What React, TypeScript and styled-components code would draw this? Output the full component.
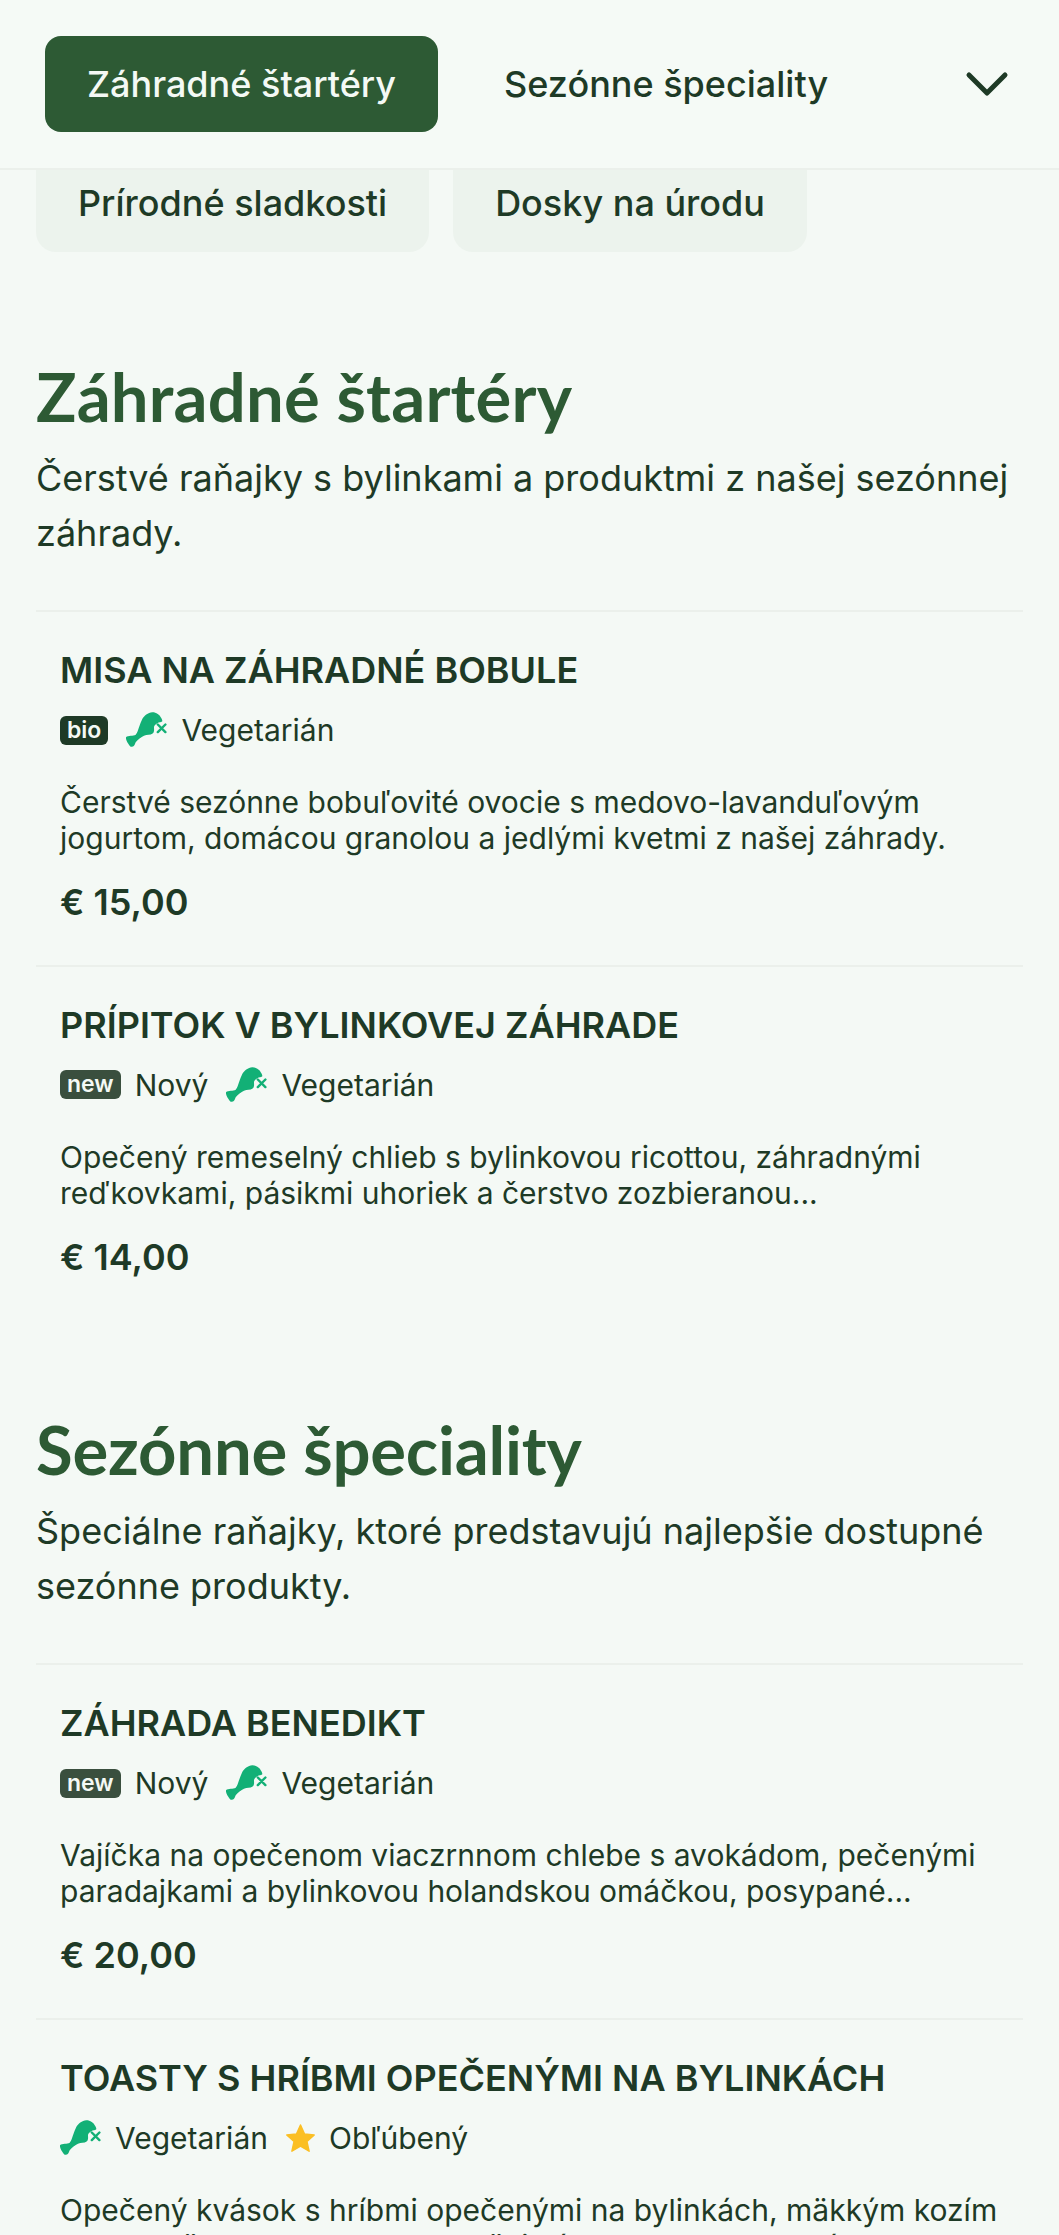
import React from "react";
import styled, { createGlobalStyle } from "styled-components";

const Global = createGlobalStyle`
  html, body { margin: 0; padding: 0; background: #f4f9f5; }
  body { font-family: Inter, "Liberation Sans", sans-serif; color: #1e3a26; }
`;

const Page = styled.div`
  width: 1059px;
  height: 2235px;
  overflow: hidden;
  background: #f4f9f5;
  position: relative;
`;

const Header = styled.header`
  position: absolute;
  top: 0;
  left: 0;
  right: 0;
  height: 170px;
  box-sizing: border-box;
  padding: 36px 50px 0 45px;
  display: flex;
  align-items: flex-start;
  background: #f5faf6;
  border-bottom: 2px solid #ebf0eb;
  z-index: 2;
`;

const Tab = styled.div<{ $active?: boolean }>`
  height: 96px;
  box-sizing: border-box;
  padding: 0 42px;
  display: flex;
  align-items: center;
  border-radius: 16px;
  font-size: 36px;
  font-weight: 500;
  white-space: nowrap;
  background: ${(p) => (p.$active ? "#2d5a34" : "transparent")};
  color: ${(p) => (p.$active ? "#f4f9f5" : "#1e3a26")};
  margin-right: ${(p) => (p.$active ? "24px" : "0")};
`;

const Chevron = styled.div`
  margin-left: auto;
  height: 96px;
  display: flex;
  align-items: center;
`;

const ChipRow = styled.div`
  display: flex;
  gap: 24px;
  padding: 108px 36px 0;
`;

const Chip = styled.div`
  height: 144px;
  box-sizing: border-box;
  padding: 59px 42px 0;
  border-radius: 20px;
  background: #ecf3ed;
  font-size: 36px;
  line-height: 72px;
  font-weight: 500;
  white-space: nowrap;
`;

const Section = styled.section`
  padding: 0 36px;
`;

const Head = styled.div<{ $top: number }>`
  padding-top: ${(p) => p.$top}px;
  padding-bottom: 50px;
`;

const Title = styled.h2<{ $tracking: number }>`
  margin: 0;
  font-family: Lato, sans-serif;
  font-weight: 700;
  font-size: 67px;
  line-height: 80px;
  letter-spacing: ${(p) => p.$tracking}px;
  color: #2d5a34;
`;

const Subtitle = styled.p`
  margin: 15px 0 0;
  font-size: 36px;
  line-height: 54.500px;
`;

const Item = styled.article`
  border-top: 2px solid #ebf0eb;
  padding: 36px 24px 0;
  box-sizing: border-box;
  height: 354.500px;
`;

const ItemName = styled.h3`
  margin: 0;
  font-size: 36px;
  line-height: 44px;
  font-weight: 600;
  text-transform: uppercase;
`;

const Tags = styled.div`
  display: flex;
  align-items: center;
  margin-top: 18px;
  height: 40px;
  font-size: 30px;
`;

const Tag = styled.span`
  display: flex;
  align-items: center;
  gap: 14px;
  margin-right: 18px;
`;

const Badge = styled.span<{ $bg: string }>`
  background: ${(p) => p.$bg};
  color: #f4f9f5;
  font-size: 23px;
  font-weight: 600;
  line-height: 29px;
  padding: 0 7px;
  border-radius: 6px;
`;

const Desc = styled.p`
  margin: 34px 0 0;
  font-size: 30px;
  line-height: 36px;
`;

const Price = styled.div`
  margin-top: 24px;
  font-size: 36px;
  line-height: 44px;
  font-weight: 600;
`;

const Leg = () => (
  <svg width="41" height="36" viewBox="0 0 41 36">
    <path
      fill="#12b076"
      d="M16.300 7C18 4 22 .5 26.300 .3C30 .2 34 3 34.700 5.300C35.500 6.500 36.500 8 36.300 9.300C35 10.500 33 10 31.300 11.300C29 12.800 28 14 28 15.300C28 17.500 28.500 19.500 27 21.300C24 23.500 21 22.500 18 23.700C15 25 12 27.500 9.700 30.300C9 31.500 8.800 33 8 33.700C7 34.800 5.500 35 4.700 34.700C3.500 34.200 2.800 32.500 1.300 30.300C.5 28.500 -.3 27 0 25.300C1 24 3 24.200 4.700 23.700C6.500 23.500 8.500 23.800 9.700 22.700C11.500 20.500 12 18 13 15.300C14 12.500 15 9.500 16.300 7Z"
    />
    <path stroke="#12b076" strokeWidth="2.400" strokeLinecap="round" d="M31.800 12.500l7.600 7.600M39.400 12.500l-7.600 7.600" />
  </svg>
);

const Star = () => (
  <svg width="29" height="30" viewBox="0 0 30 30">
    <path
      fill="#fbbf24"
      stroke="#fbbf24"
      strokeWidth="1.500"
      strokeLinejoin="round"
      d="M15 1.500l4.200 9.400 10 1-7.500 6.800 2.200 10L15 23.500l-8.900 5.200 2.200-10L.8 11.900l10-1z"
    />
  </svg>
);

type TagKind = "bio" | "new" | "veg" | "fav";

const TagView = ({ kind }: { kind: TagKind }) => {
  if (kind === "bio") return <Tag><Badge $bg="#1e3a26">bio</Badge></Tag>;
  if (kind === "new") return <Tag><Badge $bg="#3a4f3e">new</Badge>Nový</Tag>;
  if (kind === "veg") return <Tag><Leg />Vegetarián</Tag>;
  return <Tag><Star />Obľúbený</Tag>;
};

const sections = [
  {
    title: "Záhradné štartéry",
    tracking: 0.2,
    sub: "Čerstvé raňajky s bylinkami a produktmi z našej sezónnej záhrady.",
    items: [
      { name: "Misa na záhradné bobule", tags: ["bio", "veg"] as TagKind[], desc: ["Čerstvé sezónne bobuľovité ovocie s medovo-lavanduľovým", "jogurtom, domácou granolou a jedlými kvetmi z našej záhrady."], price: "€ 15,00" },
      { name: "Prípitok v bylinkovej záhrade", tags: ["new", "veg"] as TagKind[], desc: ["Opečený remeselný chlieb s bylinkovou ricottou, záhradnými", "reďkovkami, pásikmi uhoriek a čerstvo zozbieranou..."], price: "€ 14,00" },
    ],
  },
  {
    title: "Sezónne špeciality",
    tracking: -0.2,
    sub: "Špeciálne raňajky, ktoré predstavujú najlepšie dostupné sezónne produkty.",
    items: [
      { name: "Záhrada Benedikt", tags: ["new", "veg"] as TagKind[], desc: ["Vajíčka na opečenom viaczrnnom chlebe s avokádom, pečenými", "paradajkami a bylinkovou holandskou omáčkou, posypané..."], price: "€ 20,00" },
      { name: "Toasty s hríbmi opečenými na bylinkách", tags: ["veg", "fav"] as TagKind[], desc: ["Opečený kvások s hríbmi opečenými na bylinkách, mäkkým kozím", "syrom a čerstvou rukolou z našej záhrady, pokvapkané..."], price: "€ 18,00" },
    ],
  },
];

export default function App() {
  return (
    <Page>
      <Global />
      <Header>
        <Tab $active>Záhradné štartéry</Tab>
        <Tab>Sezónne špeciality</Tab>
        <Chevron>
          <svg width="44" height="44" viewBox="0 0 44 44" fill="none" stroke="#1e3a26" strokeWidth="5" strokeLinecap="round" strokeLinejoin="round">
            <path d="M4 13l18 18 18-18" />
          </svg>
        </Chevron>
      </Header>
      <ChipRow>
        <Chip>Prírodné sladkosti</Chip>
        <Chip>Dosky na úrodu</Chip>
      </ChipRow>
      {sections.map((s, i) => (
        <Section key={s.title}>
          <Head $top={i === 0 ? 104 : 90}>
            <Title $tracking={s.tracking}>{s.title}</Title>
            <Subtitle>{s.sub}</Subtitle>
          </Head>
          {s.items.map((it) => (
            <Item key={it.name}>
              <ItemName>{it.name}</ItemName>
              <Tags>{it.tags.map((t) => <TagView key={t} kind={t} />)}</Tags>
              <Desc>{it.desc[0]}<br />{it.desc[1]}</Desc>
              <Price>{it.price}</Price>
            </Item>
          ))}
        </Section>
      ))}
    </Page>
  );
}
